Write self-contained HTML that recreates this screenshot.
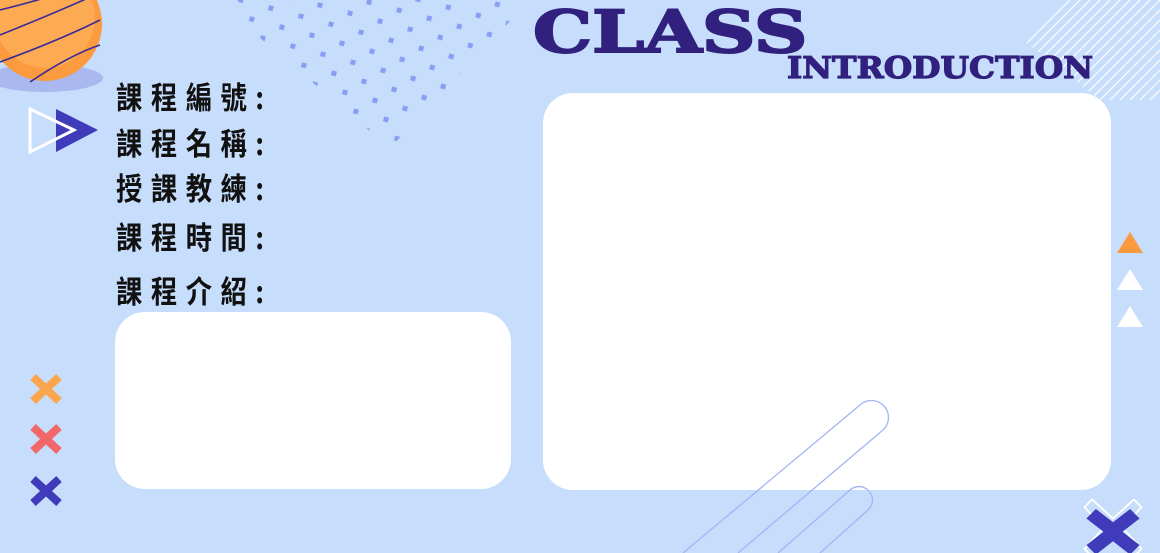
<!DOCTYPE html>
<html><head><meta charset="utf-8"><style>
body{margin:0;width:1160px;height:553px;overflow:hidden;background:#c7ddfc;position:relative;font-family:"Liberation Sans","Noto Sans CJK TC",sans-serif}
.box{position:absolute;background:#fff;border-radius:30px}
.lab{position:absolute;left:116px;font-family:"Noto Sans CJK TC",sans-serif;font-size:31px;letter-spacing:10px;color:#111;font-weight:700;line-height:1;transform:scaleX(0.85);transform-origin:left}
.t{position:absolute;font-family:"DejaVu Serif",serif;font-weight:900;color:#31207e;-webkit-text-stroke:2px #31207e;line-height:1;white-space:nowrap}
</style></head><body>
<svg width="1160" height="553" style="position:absolute;left:0;top:0">
<defs>
<pattern id="dp" width="22" height="22" patternUnits="userSpaceOnUse" patternTransform="rotate(-30)">
<rect x="8" y="8" width="5" height="5" fill="#8b9cf3" transform="rotate(45 10.5 10.5)"/>
</pattern>
<clipPath id="dc"><polygon points="215,0 530,0 390,148"/></clipPath>
<clipPath id="sc"><polygon points="1010,0 1160,0 1160,100 1100,100 1010,30"/></clipPath>
</defs>
<rect x="200" y="0" width="340" height="150" fill="url(#dp)" clip-path="url(#dc)"/>
<g clip-path="url(#sc)" stroke="#fff" stroke-width="1.3" opacity="0.9">
<line x1="1000" y1="110" x2="1120" y2="-10"/><line x1="1010" y1="110" x2="1130" y2="-10"/><line x1="1020" y1="110" x2="1140" y2="-10"/><line x1="1030" y1="110" x2="1150" y2="-10"/><line x1="1040" y1="110" x2="1160" y2="-10"/><line x1="1050" y1="110" x2="1170" y2="-10"/><line x1="1060" y1="110" x2="1180" y2="-10"/><line x1="1070" y1="110" x2="1190" y2="-10"/><line x1="1080" y1="110" x2="1200" y2="-10"/><line x1="1090" y1="110" x2="1210" y2="-10"/><line x1="1100" y1="110" x2="1220" y2="-10"/><line x1="1110" y1="110" x2="1230" y2="-10"/><line x1="1120" y1="110" x2="1240" y2="-10"/><line x1="1130" y1="110" x2="1250" y2="-10"/><line x1="1140" y1="110" x2="1260" y2="-10"/><line x1="990" y1="110" x2="1110" y2="-10"/><line x1="980" y1="110" x2="1100" y2="-10"/><line x1="970" y1="110" x2="1090" y2="-10"/><line x1="960" y1="110" x2="1080" y2="-10"/>
</g>
<ellipse cx="45" cy="78" rx="58" ry="14" fill="#a9b9ef"/>
<circle cx="45" cy="24" r="57" fill="#fb9a3e"/>
<circle cx="45" cy="18" r="50" fill="#fdab52"/>
<g stroke="#3a2a9a" stroke-width="1.6" fill="none">
<path d="M0,10 Q40,0 70,-10"/><path d="M0,35 Q50,15 95,-5"/><path d="M0,62 Q60,40 100,20"/><path d="M30,82 Q70,55 100,45"/>
</g>
<polygon points="56,109 56,152 98,130" fill="#3f3bbb"/>
<polygon points="30,109 30,152 74,130" fill="none" stroke="#fff" stroke-width="3"/>
<g stroke-width="8" stroke-linecap="butt">
<path d="M33,377 L59,401 M59,377 L33,401" stroke="#fba54c"/>
<path d="M33,427 L59,451 M59,427 L33,451" stroke="#f2686a"/>
<path d="M33,479 L59,503 M59,479 L33,503" stroke="#3f3bbb"/>
</g>
<polygon points="1117,253 1130,232 1143,253" fill="#fb9a3e"/>
<polygon points="1117,290 1130,269 1143,290" fill="#fff"/>
<polygon points="1117,327 1130,306 1143,327" fill="#fff"/>
</svg>
<div class="box" style="left:115px;top:312px;width:396px;height:177px"></div>
<div class="box" style="left:543px;top:93px;width:568px;height:397px"></div>
<svg width="1160" height="553" style="position:absolute;left:0;top:0">
<g stroke="#a3b4f7" stroke-width="1.3" fill="none">
<path d="M683,553 L860,405 A16,16 0 0 1 883,430 L738,553"/>
<path d="M778,553 L850,490 A12,12 0 0 1 868,510 L820,553"/>
</g>
<g transform="translate(1113,528) scale(0.95)">
<path d="M-30,-22 L-22,-30 L0,-10 L22,-30 L30,-22 L10,0 L30,22 L22,30 L0,10 L-22,30 L-30,22 L-10,0Z" fill="none" stroke="#fff" stroke-width="2"/>
<path d="M-28,-10 L-18,-20 L0,-6 L18,-20 L28,-10 L10,4 L28,18 L18,28 L0,14 L-18,28 L-28,18 L-10,4Z" fill="#3f3bbb"/>
</g>
</svg>
<div class="t" style="left:533px;top:3px;font-size:58px;transform:scaleX(1.28);transform-origin:left">CLASS</div>
<div class="t" style="left:787px;top:54px;font-size:30px;-webkit-text-stroke:1.2px #31207e;transform:scaleX(1.09);transform-origin:left">INTRODUCTION</div>
<div class="lab" style="top:80px">課程編號:</div>
<div class="lab" style="top:126px">課程名稱:</div>
<div class="lab" style="top:171px">授課教練:</div>
<div class="lab" style="top:220px">課程時間:</div>
<div class="lab" style="top:274px">課程介紹:</div>
</body></html>
